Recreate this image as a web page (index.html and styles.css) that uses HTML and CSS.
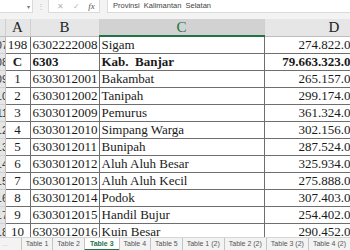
FILE: index.html
```html
<!DOCTYPE html>
<html lang="id">
<head>
    <meta charset="UTF-8">
    <title>Sheet</title>
    <link rel="stylesheet" href="styles.css">
</head>
<body>
    <div class="formula-bar">
        <div class="name-box"><span class="caret">▾</span></div>
        <span class="grip">⋮</span>
        <div class="fx-box">
            <span class="fx-icon">✕</span>
            <span class="fx-icon">✓</span>
            <span class="fx-label">fx</span>
        </div>
        <div class="formula-input">Provinsi&nbsp; Kalimantan&nbsp; Selatan</div>
    </div>

    <div class="sheet">
        <table class="grid">
            <colgroup>
                <col class="col-row">
                <col class="col-a">
                <col class="col-b">
                <col class="col-c">
                <col class="col-d">
            </colgroup>
            <thead>
                <tr>
                    <th class="corner"></th>
                    <th>A</th>
                    <th>B</th>
                    <th class="selected">C</th>
                    <th>D</th>
                </tr>
            </thead>
            <tbody>
                <tr><td class="rh"><div><span>207</span></div></td><td class="num">198</td><td>6302222008</td><td>Sigam</td><td class="val">274.822.000</td></tr>
                <tr class="bold"><td class="rh"><div><span>208</span></div></td><td class="num">C</td><td>6303</td><td>Kab.&nbsp; Banjar</td><td class="val">79.663.323.000</td></tr>
                <tr><td class="rh"><div><span>209</span></div></td><td class="num">1</td><td>6303012001</td><td>Bakambat</td><td class="val">265.157.000</td></tr>
                <tr><td class="rh"><div><span>210</span></div></td><td class="num">2</td><td>6303012002</td><td>Tanipah</td><td class="val">299.174.000</td></tr>
                <tr><td class="rh"><div><span>211</span></div></td><td class="num">3</td><td>6303012009</td><td>Pemurus</td><td class="val">361.324.000</td></tr>
                <tr><td class="rh"><div><span>212</span></div></td><td class="num">4</td><td>6303012010</td><td>Simpang Warga</td><td class="val">302.156.000</td></tr>
                <tr><td class="rh"><div><span>213</span></div></td><td class="num">5</td><td>6303012011</td><td>Bunipah</td><td class="val">287.524.000</td></tr>
                <tr><td class="rh"><div><span>214</span></div></td><td class="num">6</td><td>6303012012</td><td>Aluh Aluh Besar</td><td class="val">325.934.000</td></tr>
                <tr><td class="rh"><div><span>215</span></div></td><td class="num">7</td><td>6303012013</td><td>Aluh Aluh Kecil</td><td class="val">275.888.000</td></tr>
                <tr><td class="rh"><div><span>216</span></div></td><td class="num">8</td><td>6303012014</td><td>Podok</td><td class="val">307.403.000</td></tr>
                <tr><td class="rh"><div><span>217</span></div></td><td class="num">9</td><td>6303012015</td><td>Handil Bujur</td><td class="val">254.402.000</td></tr>
                <tr><td class="rh"><div><span>218</span></div></td><td class="num">10</td><td>6303012016</td><td>Kuin Besar</td><td class="val">290.452.000</td></tr>
            </tbody>
        </table>
    </div>

    <div class="tabs">
        <div class="tab-lead">…</div>
        <div class="tab">Table 1</div>
        <div class="tab">Table 2</div>
        <div class="tab active">Table 3</div>
        <div class="tab">Table 4</div>
        <div class="tab">Table 5</div>
        <div class="tab">Table 1 (2)</div>
        <div class="tab">Table 2 (2)</div>
        <div class="tab">Table 3 (2)</div>
        <div class="tab">Table 4 (2)</div>
    </div>
</body>
</html>
```

FILE: styles.css
```css
:root {
    --bar-bg: #f3f3f3;
    --header-bg: #e6e6e6;
    --header-sel: #d2d2d2;
    --green: #217346;
    --cell-line: #6e6e6e;
}

body {
    margin: 0;
    width: 350px;
    height: 250px;
    overflow: hidden;
    background: #fff;
    font-family: 'Liberation Serif', serif;
}

/* formula bar */
.formula-bar {
    height: 19px;
    background: var(--bar-bg);
    display: flex;
    align-items: flex-start;
    font-family: 'Liberation Sans', sans-serif;
}

.name-box {
    width: 33px;
    height: 13px;
    background: #fff;
    border-bottom: 1px solid #dadada;
    border-right: 1px solid #dadada;
    box-sizing: border-box;
    display: flex;
    justify-content: flex-end;
    align-items: center;
    padding-right: 2px;
}

.caret {
    font-size: 6px;
    color: #777;
}

.grip {
    width: 15px;
    text-align: center;
    font-size: 8px;
    line-height: 13px;
    color: #b8b8b8;
}

.fx-box {
    width: 52px;
    height: 13px;
    background: #fff;
    border: 1px solid #dadada;
    border-top: none;
    box-sizing: border-box;
    display: flex;
    align-items: center;
    justify-content: space-around;
    padding-left: 4px;
}

.fx-icon {
    font-size: 8px;
    color: #b4b4b4;
}

.fx-label {
    font-family: 'Liberation Serif', serif;
    font-style: italic;
    font-size: 9px;
    color: #555;
}

.formula-input {
    flex: 1;
    margin-left: 7px;
    height: 13px;
    background: #fff;
    border: 1px solid #dadada;
    border-top: none;
    border-right: none;
    box-sizing: border-box;
    padding-left: 5px;
    font-size: 7.5px;
    line-height: 12px;
    color: #444;
    white-space: nowrap;
}

/* sheet */
.sheet {
    height: 218px;
    overflow: hidden;
}

.grid {
    border-collapse: collapse;
    table-layout: fixed;
    width: 404px;
}

.col-row { width: 5px; }
.col-a { width: 25px; }
.col-b { width: 69px; }
.col-c { width: 165px; }
.col-d { width: 140px; }

.grid th {
    height: 16px;
    padding: 0;
    background: var(--header-bg);
    border-right: 1px solid #cfcfcf;
    border-bottom: 1px solid #bdbdbd;
    font-weight: normal;
    font-size: 15px;
    line-height: 16px;
    color: #222;
}

.grid th.selected {
    background: var(--header-sel);
    color: var(--green);
    border-bottom: 2px solid var(--green);
}

.grid td {
    height: 16px;
    padding: 0 2px;
    border: 1px solid var(--cell-line);
    font-size: 13px;
    line-height: 16px;
    color: #1a1a1a;
    white-space: nowrap;
    overflow: hidden;
}

/* row headers: only the last digit's edge peeks in */
.grid td.rh {
    padding: 0;
    background: var(--header-bg);
    border: none;
    border-right: 1px solid #bdbdbd;
    border-bottom: 1px solid #d0d0d0;
}

.grid td.rh div {
    width: 5px;
    overflow: hidden;
    display: flex;
    justify-content: flex-end;
    font-family: 'Liberation Sans', sans-serif;
    font-size: 11px;
    font-weight: normal;
    color: #333;
}

.grid td.rh span {
    flex: none;
    margin-right: -3px;
}

.grid td.num {
    text-align: center;
}

.grid td.val {
    text-align: right;
    padding-right: 40px;
}

.grid tr.bold td {
    font-weight: bold;
}

/* sheet tabs */
.tabs {
    height: 13px;
    background: var(--bar-bg);
    border-top: 1px solid #d6d6d6;
    display: flex;
    font-family: 'Liberation Sans', sans-serif;
    font-size: 7px;
    line-height: 12px;
    color: #555;
    white-space: nowrap;
}

.tab-lead {
    width: 23px;
    color: #c0c0c0;
    padding-left: 2px;
    box-sizing: border-box;
}

.tab {
    padding: 0 4px;
    border-left: 1px solid #c4c4c4;
}

.tab.active {
    background: #fff;
    color: var(--green);
    font-weight: bold;
    border-bottom: 2px solid var(--green);
    line-height: 11px;
    padding: 0 5px;
}
```
